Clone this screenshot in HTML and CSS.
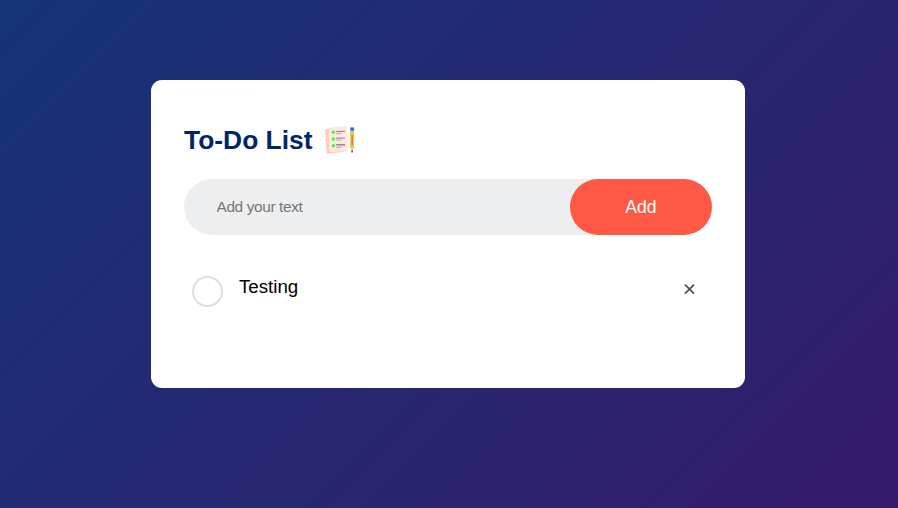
FILE: index.html
```html
<!DOCTYPE html>
<html lang="en">
<head>
<meta charset="utf-8">
<title>To-Do List</title>
<link rel="stylesheet" href="styles.css">
</head>
<body>
<div class="container">
  <main class="todo-app">
    <h2 class="title">To-Do List
      <svg class="title-icon" width="30" height="29" viewBox="0 0 30 29" aria-hidden="true">
        <path fill="#ffcdbf" d="M0 4.2Q0 3 1.3 2.9L17 2 19.5 25.8 3.5 27.8Q1.6 28 1.5 26.2Z"/>
        <path fill="#ffe7dc" d="M4 2.5Q4 1.3 5.3 1.2L20.5.2Q22.2.1 22.3 1.8V23.5Q22.3 25 20.8 25.1L5.8 25.9Q4.2 26 4.2 24.5Z"/>
        <g fill="#3dfc32"><circle cx="8.4" cy="6.3" r="1.7"/><circle cx="8.4" cy="13" r="1.7"/><circle cx="8.4" cy="19.8" r="1.7"/></g>
        <path stroke="#94779a" stroke-width="1" d="M11.2 5.4H20M11.2 12.1H20M11.2 18.6H20"/>
        <path stroke="#baa3b5" stroke-width="1" d="M11.2 7.4H16.2M11.2 14.1H16.2M11.2 19.7H20M11.2 21.3H16.2"/>
        <path fill="#ffb84a" d="M25.2 5H29.1V22.4H25.2Z"/>
        <path fill="#bd8540" d="M26.5 9H27.8V19H26.5Z"/>
        <path fill="#0784f5" d="M25.2 1.4H29.1V4.8H25.2Z"/>
        <path fill="#ffc5b5" d="M25.2 22.2H29.1L28 25H26.3Z"/>
        <path fill="#75616c" d="M26.2 24.3H28.1V26.5H26.2Z"/>
      </svg>
    </h2>
    <form class="row">
      <input class="entry" type="text" placeholder="Add your text">
      <button class="add" type="button">Add</button>
    </form>
    <ul class="list">
      <li class="task"><span class="check"></span><span class="label">Testing</span><span class="remove"><svg width="11" height="11" viewBox="0 0 11 11"><path d="M1 .7 10 9.7M10 .7 1 9.7"/></svg></span></li>
    </ul>
  </main>
</div>
</body>
</html>
```
FILE: styles.css
```css
* {
  margin: 0;
  padding: 0;
  box-sizing: border-box;
  font-family: "Liberation Sans", Arial, sans-serif;
}
body {
  overflow: hidden;
}
.container {
  height: 508px;
  padding: 80px 153px 0 151px;
  background: linear-gradient(135deg, #163477, #4e085f) 0 0 / 1250px 1250px no-repeat;
}
.todo-app {
  width: 594px;
  height: 308px;
  padding: 44px 33px 77px;
  background: #fff;
  border-radius: 11px;
}
.title {
  display: flex;
  align-items: center;
  height: 33px;
  margin-bottom: 22px;
  color: #002765;
  font-size: 26.4px;
  line-height: 33px;
}
.title-icon {
  margin-left: 12px;
}
.row {
  display: flex;
  height: 56px;
  margin-bottom: 27px;
  padding-left: 22px;
  background: #edeef0;
  border-radius: 33px;
}
.entry {
  flex: 1;
  min-width: 0;
  padding: 11px 11px 11px 10.5px;
  border: none;
  outline: none;
  background: transparent;
  font-size: 15.4px;
  letter-spacing: -0.37px;
}
.entry::placeholder {
  color: #757575;
}
.add {
  width: 142px;
  border: none;
  border-radius: 44px;
  background: #ff5945;
  color: #fff;
  font-size: 17.6px;
}
.list {
  list-style: none;
}
.task {
  display: flex;
  align-items: flex-start;
  height: 48px;
  padding: 14px 17px 0 8px;
  font-size: 18.7px;
  line-height: 21px;
}
.check {
  width: 31px;
  height: 31px;
  border: 2px solid #dedede;
  border-radius: 50%;
}
.label {
  flex: 1;
  margin-left: 16px;
}
.remove {
  display: flex;
  margin-top: 8px;
}
.remove path {
  fill: none;
  stroke: #555;
  stroke-width: 1.9;
}
```
